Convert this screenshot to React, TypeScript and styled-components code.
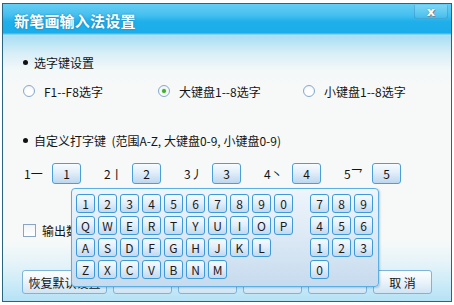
import React from "react";
import styled, {createGlobalStyle} from "styled-components";

const mainRows = [
    ["1", "2", "3", "4", "5", "6", "7", "8", "9", "0"],
    ["Q", "W", "E", "R", "T", "Y", "U", "I", "O", "P"],
    ["A", "S", "D", "F", "G", "H", "J", "K", "L"],
    ["Z", "X", "C", "V", "B", "N", "M"],
];

const numRows = [
    ["7", "8", "9"],
    ["4", "5", "6"],
    ["1", "2", "3"],
    ["0"],
];

const strokes = [
    {label: "1一", key: "1"},
    {label: "2丨", key: "2"},
    {label: "3丿", key: "3"},
    {label: "4丶", key: "4"},
    {label: "5乛", key: "5"},
];

const modes = [
    {text: "F1--F8选字", width: 135, checked: false},
    {text: "大键盘1--8选字", width: 145, checked: true},
    {text: "小键盘1--8选字", width: 0, checked: false},
];

const footerButtons = [
    {text: "恢复默认设置", width: 85},
    {text: "", width: 59},
    {text: "", width: 59},
    {text: "", width: 59},
    {text: "", width: 59},
    {text: "取 消", width: 59},
];

export default function App() {
    return (
        <>
            <GlobalStyle/>
            <Window>
                <TitleBar>
                    <Title>新笔画输入法设置</Title>
                    <CloseButton>x</CloseButton>
                </TitleBar>

                <Body>
                    <Heading $top={16}><Bullet/>选字键设置</Heading>
                    <RadioRow>
                        {modes.map(({text, width, checked}) => (
                            <RadioItem key={text} $width={width}>
                                <Radio $checked={checked}/>
                                <span>{text}</span>
                            </RadioItem>
                        ))}
                    </RadioRow>

                    <Heading $top={29}><Bullet/>自定义打字键&nbsp; (范围A-Z, 大键盘0-9, 小键盘0-9)</Heading>
                    <StrokeRow>
                        {strokes.map(({label, key}) => (
                            <StrokeGroup key={key}>
                                <StrokeLabel>{label}</StrokeLabel>
                                <StrokeKey>{key}</StrokeKey>
                            </StrokeGroup>
                        ))}
                    </StrokeRow>

                    <CheckRow>
                        <CheckBox/>
                        <span>输出数字</span>
                    </CheckRow>

                    <Footer>
                        {footerButtons.map(({text, width}, i) => (
                            <FooterButton key={i} $width={width}>{text}</FooterButton>
                        ))}
                    </Footer>
                </Body>

                <KeyPad>
                    <KeyBlock>
                        {mainRows.map((row, i) => (
                            <KeyRow key={i}>
                                {row.map(k => <Key key={k}>{k}</Key>)}
                            </KeyRow>
                        ))}
                    </KeyBlock>
                    <KeyBlock>
                        {numRows.map((row, i) => (
                            <KeyRow key={i}>
                                {row.map(k => <Key key={k}>{k}</Key>)}
                            </KeyRow>
                        ))}
                    </KeyBlock>
                </KeyPad>
            </Window>
        </>
    );
}

const GlobalStyle = createGlobalStyle`
  html, body {
    margin: 0;
    padding: 0;
    background: #ffffff;
  }
  body {
    font-family: "Noto Sans CJK SC", "Noto Sans", sans-serif;
    font-size: 12px;
    color: #141414;
  }
`;

const Window = styled.div`
  position: relative;
  box-sizing: border-box;
  margin: 3px 0 0 2px;
  width: 450px;
  height: 299px;
  border: 1px solid #2a6580;
  display: flex;
  flex-direction: column;
  overflow: hidden;
`;

const TitleBar = styled.div`
  height: 32px;
  flex: none;
  display: flex;
  justify-content: space-between;
  align-items: flex-start;
  background: linear-gradient(to bottom, #66cef4 0%, #45c0ef 35%, #1fb0eb 55%, #1badea 90%, #8fd6f2 96%, #c4ebf9 100%);
`;

const Title = styled.div`
  align-self: center;
  padding-left: 11px;
  color: #ffffff;
  font-size: 15px;
  font-weight: bold;
  letter-spacing: 0.2px;
  text-shadow: 0 0 2px rgba(0, 70, 120, 0.55);
`;

const CloseButton = styled.div`
  margin: 1px 3px 0 0;
  width: 34px;
  height: 14px;
  box-sizing: border-box;
  border: 1px solid rgba(30, 120, 170, 0.35);
  border-top: none;
  border-radius: 0 0 3px 3px;
  background: linear-gradient(to bottom, rgba(255, 255, 255, 0.18), rgba(255, 255, 255, 0.05));
  color: #ffffff;
  font-family: "DejaVu Sans", sans-serif;
  font-size: 13px;
  font-weight: bold;
  line-height: 13px;
  text-align: center;
  text-shadow: 0 0 1px #4a6a80, 1px 1px 0 #7a8c98;
`;

const Body = styled.div`
  flex: 1;
  display: flex;
  flex-direction: column;
  padding-left: 17px;
  background: linear-gradient(to bottom,
  #a9def3 0px, #d9eff7 18px, #f3f8f9 34px, #f7f9f8 50px,
  #f7f9f8 205px, #e4f3f9 228px, #c9eaf7 250px, #b4e2f5 100%);
`;

const Heading = styled.div<{ $top: number }>`
  margin-top: ${p => p.$top}px;
  height: 20px;
  display: flex;
  align-items: center;
  white-space: pre;
`;

const Bullet = styled.span`
  width: 5px;
  height: 5px;
  border-radius: 50%;
  background: #111111;
  margin: 0 6px 0 3px;
`;

const RadioRow = styled.div`
  margin: 9px 0 0 3px;
  height: 20px;
  display: flex;
  align-items: center;
`;

const RadioItem = styled.div<{ $width: number }>`
  display: flex;
  align-items: center;
  width: ${p => (p.$width ? `${p.$width}px` : "auto")};
`;

const Radio = styled.span<{ $checked: boolean }>`
  box-sizing: border-box;
  width: 12px;
  height: 12px;
  margin-right: 9px;
  border-radius: 50%;
  border: 1px solid #86a9d0;
  background: radial-gradient(circle at 50% 60%, #ffffff 40%, #e3eaf3 100%);
  display: flex;
  align-items: center;
  justify-content: center;

  &::after {
    content: "";
    display: ${p => (p.$checked ? "block" : "none")};
    width: 4px;
    height: 4px;
    border-radius: 50%;
    background: #3fae2a;
    box-shadow: 0 0 2px #7fd060;
  }
`;

const StrokeRow = styled.div`
  margin: 13px 0 0 4px;
  display: flex;
  gap: 23px;
`;

const StrokeGroup = styled.div`
  display: flex;
  align-items: center;
`;

const StrokeLabel = styled.span`
  width: 28px;
`;

const StrokeKey = styled.div`
  box-sizing: border-box;
  width: 29px;
  height: 21px;
  border: 1px solid #4b9fd9;
  border-radius: 3px;
  background: linear-gradient(to bottom, #f7fbfe 0%, #e2eef9 45%, #bcd7ef 100%);
  display: flex;
  align-items: center;
  justify-content: center;
`;

const CheckRow = styled.div`
  margin: 36px 0 0 3px;
  height: 20px;
  display: flex;
  align-items: center;
`;

const CheckBox = styled.span`
  box-sizing: border-box;
  width: 13px;
  height: 13px;
  margin-right: 6px;
  border: 1px solid #8aa5c4;
  background: linear-gradient(to bottom, #f2f4f7, #ffffff);
`;

const Footer = styled.div`
  margin: 30px 0 0 2px;
  display: flex;
  gap: 6px;
`;

const FooterButton = styled.div<{ $width: number }>`
  box-sizing: border-box;
  width: ${p => p.$width}px;
  height: 24px;
  border: 1px solid #7fb3da;
  border-radius: 3px;
  background: linear-gradient(to bottom, #fdfeff 0%, #edf5fb 45%, #cfe4f4 100%);
  display: flex;
  align-items: center;
  justify-content: center;
  white-space: pre;
`;

const KeyPad = styled.div`
  position: absolute;
  left: 68px;
  top: 184px;
  box-sizing: border-box;
  width: 308px;
  height: 99px;
  padding: 5px 0 0 4px;
  border: 1px solid #5aaee2;
  border-radius: 4px;
  background: linear-gradient(to bottom, #eef5fb 0%, #dce9f5 50%, #c6dbee 100%);
  box-shadow: 1px 1px 2px rgba(40, 70, 100, 0.25);
  display: flex;
  gap: 17px;
`;

const KeyBlock = styled.div`
  display: flex;
  flex-direction: column;
  gap: 3px;
`;

const KeyRow = styled.div`
  display: flex;
  gap: 3px;
`;

const Key = styled.div`
  box-sizing: border-box;
  width: 19px;
  height: 19px;
  border: 1px solid #3d99d8;
  border-radius: 3px;
  background: linear-gradient(to bottom, #f6fafe 0%, #e4eff9 45%, #c2d9ef 100%);
  display: flex;
  align-items: center;
  justify-content: center;
  font-size: 12px;
  line-height: 1;
  color: #1a1a1a;
`;
